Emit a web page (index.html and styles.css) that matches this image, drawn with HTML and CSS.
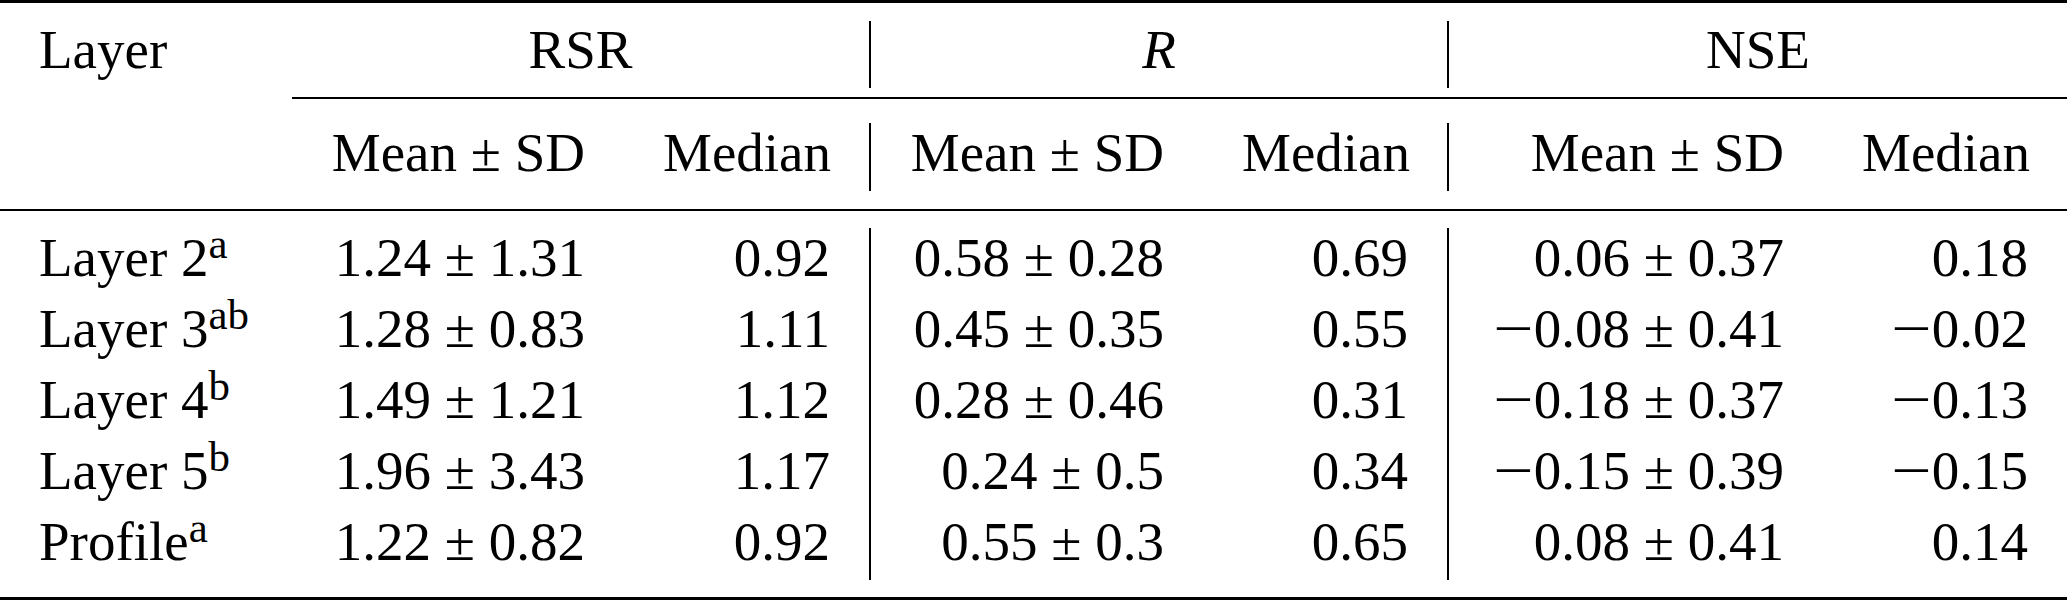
FILE: index.html
```html
<!DOCTYPE html>
<html lang="en">
<head>
<meta charset="utf-8">
<title>Layer statistics</title>
<link rel="stylesheet" href="styles.css">
</head>
<body class="page">
<div class="tbl">
  <div class="rule rule-heavy"></div>
  <div class="row hrow1">
    <div class="c l">Layer</div>
    <div class="c ctr span2">RSR</div>
    <div class="c ctr span2 vl"><i class="it">R</i></div>
    <div class="c ctr span2 vl">NSE</div>
  </div>
  <div class="cmid"></div>
  <div class="row hrow2">
    <div class="c l"></div>
    <div class="c">Mean ± SD</div>
    <div class="c">Median</div>
    <div class="c vl">Mean ± SD</div>
    <div class="c">Median</div>
    <div class="c vl">Mean ± SD</div>
    <div class="c">Median</div>
  </div>
  <div class="rule rule-light"></div>
  <div class="tbody">
    <div class="row drow">
      <div class="c l">Layer 2<sup class="sup">a</sup></div>
      <div class="c">1.24 ± 1.31</div>
      <div class="c">0.92</div>
      <div class="c vl">0.58 ± 0.28</div>
      <div class="c">0.69</div>
      <div class="c vl">0.06 ± 0.37</div>
      <div class="c">0.18</div>
    </div>
    <div class="row drow">
      <div class="c l">Layer 3<sup class="sup">ab</sup></div>
      <div class="c">1.28 ± 0.83</div>
      <div class="c">1.11</div>
      <div class="c vl">0.45 ± 0.35</div>
      <div class="c">0.55</div>
      <div class="c vl"><span class="neg">−</span>0.08 ± 0.41</div>
      <div class="c"><span class="neg">−</span>0.02</div>
    </div>
    <div class="row drow">
      <div class="c l">Layer 4<sup class="sup">b</sup></div>
      <div class="c">1.49 ± 1.21</div>
      <div class="c">1.12</div>
      <div class="c vl">0.28 ± 0.46</div>
      <div class="c">0.31</div>
      <div class="c vl"><span class="neg">−</span>0.18 ± 0.37</div>
      <div class="c"><span class="neg">−</span>0.13</div>
    </div>
    <div class="row drow">
      <div class="c l">Layer 5<sup class="sup">b</sup></div>
      <div class="c">1.96 ± 3.43</div>
      <div class="c">1.17</div>
      <div class="c vl">0.24 ± 0.5</div>
      <div class="c">0.34</div>
      <div class="c vl"><span class="neg">−</span>0.15 ± 0.39</div>
      <div class="c"><span class="neg">−</span>0.15</div>
    </div>
    <div class="row drow last">
      <div class="c l">Profile<sup class="sup">a</sup></div>
      <div class="c">1.22 ± 0.82</div>
      <div class="c">0.92</div>
      <div class="c vl">0.55 ± 0.3</div>
      <div class="c">0.65</div>
      <div class="c vl">0.08 ± 0.41</div>
      <div class="c">0.14</div>
    </div>
  </div>
  <div class="rule rule-heavy"></div>
</div>
</body>
</html>
```

FILE: styles.css
```css
html, body {
  margin: 0;
  padding: 0;
  background: #ffffff;
}

.page {
  width: 2067px;
  height: 600px;
  overflow: hidden;
  color: #000000;
  font-family: "Liberation Serif", serif;
}

.tbl {
  display: flex;
  flex-direction: column;
  width: 2067px;
  font-family: "Liberation Serif", serif;
  font-size: 55px;
}

.rule {
  background: #000000;
}

.rule-heavy {
  height: 3px;
}

.rule-light {
  height: 2px;
}

.cmid {
  height: 2px;
  margin-left: 292px;
  background: #000000;
}

.tbl .row {
  display: grid;
  grid-template-columns: 292px 332px 245px 334px 244px 376px 244px;
}

.tbl .row .c {
  font-family: "Liberation Serif", serif;
  font-size: 55px;
  padding: 0 39px;
  white-space: nowrap;
  text-align: right;
  line-height: 59px;
}

.tbl .row .c.l {
  text-align: left;
}

.tbl .row .c.ctr {
  text-align: center;
}

.span2 {
  grid-column: span 2;
}

.tbl .row .vl {
  border-left: 2px solid #000000;
}

.hrow1 {
  margin-top: 18px;
  margin-bottom: 9px;
}

.tbl .hrow1 .c {
  line-height: 57px;
  padding-bottom: 10px;
}

.hrow2 {
  margin-top: 24px;
  margin-bottom: 18px;
}

.tbl .hrow2 .c {
  padding-bottom: 9px;
}

.tbody {
  padding: 17px 0;
}

.tbl .drow .c {
  padding-bottom: 12px;
}

.tbl .drow.last .c {
  padding-bottom: 9px;
}

.tbl .it {
  font-family: "Liberation Serif", serif;
  font-style: italic;
}

.tbl .neg {
  display: inline-block;
  width: 0.74em;
  text-align: left;
  transform: scaleX(1.3);
  transform-origin: 0 50%;
  font-family: "Liberation Serif", serif;
}

.tbl .sup {
  font-family: "Liberation Serif", serif;
  font-size: 0.78em;
  line-height: 0;
  vertical-align: 0.42em;
}
```
